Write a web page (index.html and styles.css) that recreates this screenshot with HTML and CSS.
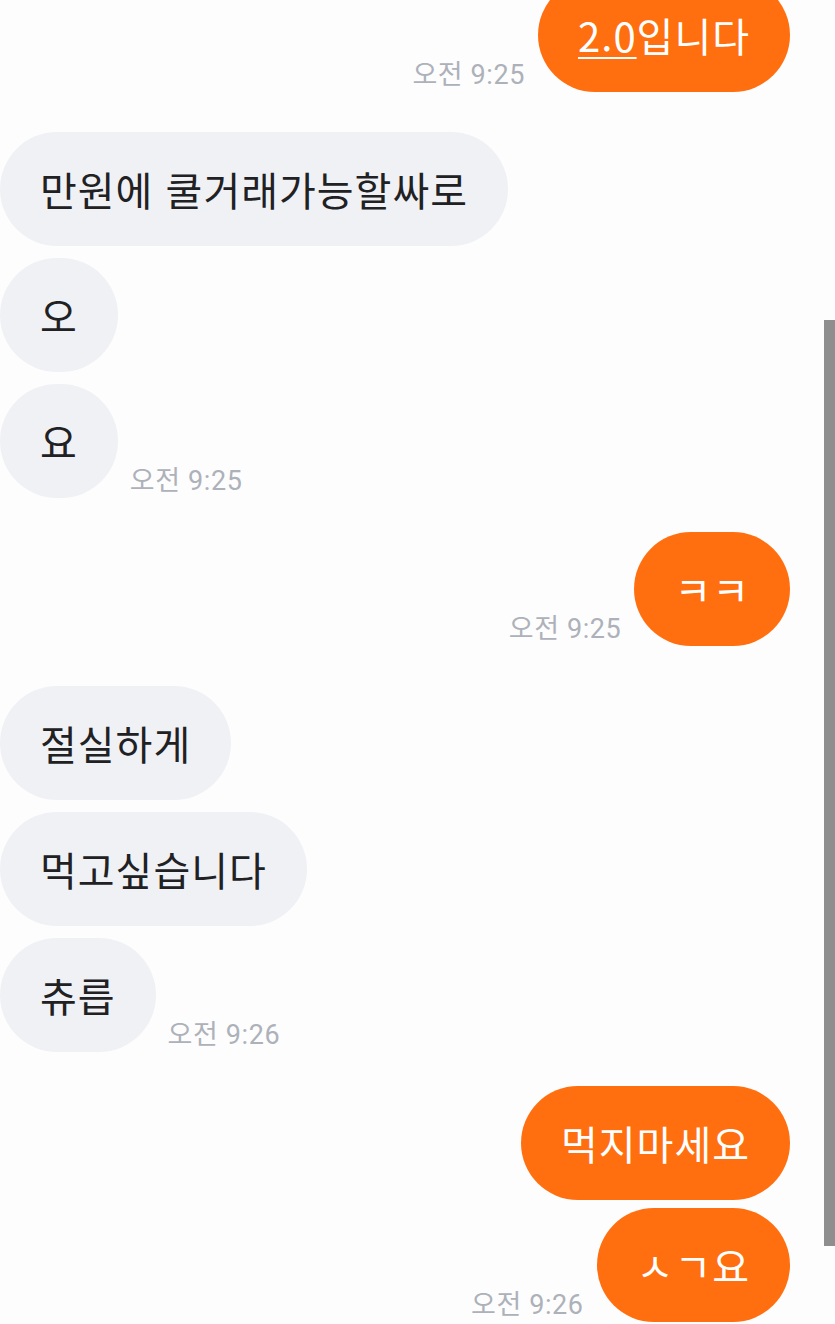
FILE: index.html
```html
<!DOCTYPE html>
<html lang="ko">
<head>
<meta charset="utf-8">
<title>채팅</title>
<link rel="stylesheet" href="styles.css">
</head>
<body>
<div class="chat">
  <div class="group out">
    <div class="row">
      <span class="time">오전 9:25</span>
      <div class="bubble"><span class="link">2.0</span>입니다</div>
    </div>
  </div>

  <div class="group in">
    <div class="row"><div class="bubble">만원에 쿨거래가능할싸로</div></div>
    <div class="row"><div class="bubble">오</div></div>
    <div class="row">
      <div class="bubble">요</div>
      <span class="time">오전 9:25</span>
    </div>
  </div>

  <div class="group out">
    <div class="row">
      <span class="time">오전 9:25</span>
      <div class="bubble">ㅋㅋ</div>
    </div>
  </div>

  <div class="group in">
    <div class="row"><div class="bubble">절실하게</div></div>
    <div class="row"><div class="bubble">먹고싶습니다</div></div>
    <div class="row">
      <div class="bubble">츄릅</div>
      <span class="time">오전 9:26</span>
    </div>
  </div>

  <div class="group out">
    <div class="row"><div class="bubble">먹지마세요</div></div>
    <div class="row">
      <span class="time">오전 9:26</span>
      <div class="bubble">ㅅㄱ요</div>
    </div>
  </div>
</div>
<div class="scroll-thumb"></div>
</body>
</html>
```

FILE: styles.css
```css
html, body {
  margin: 0;
  padding: 0;
  background: #fdfdfd;
  overflow: hidden;
  height: 1324px;
}

body {
  font-family: "Noto Sans CJK KR", "Noto Sans", sans-serif;
  color: #212124;
}

.chat {
  display: flex;
  flex-direction: column;
  margin-top: -22px;
  padding: 0 45px 0 0;
}

.group {
  display: flex;
  flex-direction: column;
}

.group.in {
  align-items: flex-start;
  gap: 12px;
  margin-top: 40px;
}

.group.out {
  align-items: flex-end;
  gap: 8px;
  margin-top: 34px;
}

.group.out:first-child {
  margin-top: 0;
}

.row {
  display: flex;
  align-items: flex-end;
  gap: 12px;
}

.group.out .row {
  gap: 13px;
}

.bubble {
  height: 114px;
  box-sizing: border-box;
  padding: 0 40px;
  border-radius: 57px;
  display: flex;
  align-items: center;
  font-size: 40px;
  letter-spacing: 1px;
  line-height: 1;
  white-space: nowrap;
}

.group.in .bubble {
  background: #f0f1f5;
  color: #212124;
}

.group.out .bubble {
  background: #ff6f0f;
  color: #ffffff;
}

.link {
  text-decoration: underline;
  text-decoration-thickness: 2px;
  text-underline-offset: 5px;
}

.time {
  font-family: "Roboto", "Noto Sans CJK KR", sans-serif;
  font-size: 27px;
  line-height: 26px;
  letter-spacing: 0.6px;
  color: #adb1ba;
  margin-bottom: 4px;
  white-space: nowrap;
}

.scroll-thumb {
  position: absolute;
  top: 320px;
  right: 0;
  width: 11px;
  height: 926px;
  background: #8e8e8e;
}
```
